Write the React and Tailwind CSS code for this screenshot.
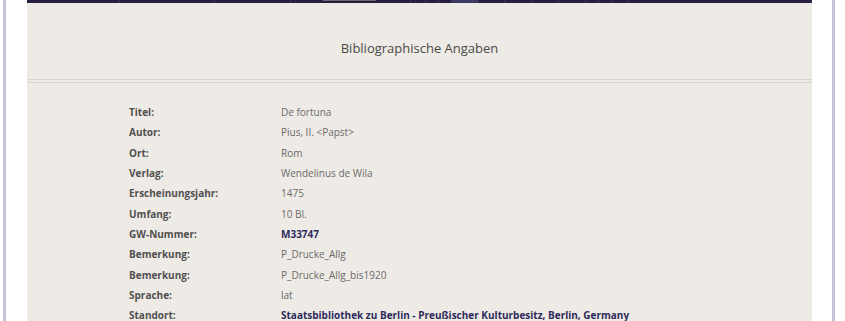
import React from "react";

const rows = [
  ["Titel:", "De fortuna", false],
  ["Autor:", "Pius, II. <Papst>", false],
  ["Ort:", "Rom", false],
  ["Verlag:", "Wendelinus de Wila", false],
  ["Erscheinungsjahr:", "1475", false],
  ["Umfang:", "10 Bl.", false],
  ["GW-Nummer:", "M33747", true],
  ["Bemerkung:", "P_Drucke_Allg", false],
  ["Bemerkung:", "P_Drucke_Allg_bis1920", false],
  ["Sprache:", "lat", false],
  ["Standort:", "Staatsbibliothek zu Berlin - Preußischer Kulturbesitz, Berlin, Germany", true],
];

// nav segment widths (px) between separators
const segs = [93, 95, 76, 120, 15, 13, 13, 27, 26, 27, 27, 27, 13, 14, 15, 184];

export default function App() {
  return (
    <div
      className="w-[845px] h-[321px] bg-white flex overflow-hidden"
      style={{ fontFamily: '"Open Sans", "Noto Sans", sans-serif' }}
    >
      <div className="w-[3px] shrink-0" />
      <div className="w-[3px] shrink-0 bg-[#c5c4d6]" />
      <div className="w-[21px] shrink-0" />
      <div className="w-[785px] shrink-0 bg-[#eeeae5] flex flex-col overflow-hidden">
        <div className="h-[3px] shrink-0 bg-[#25203f] flex">
          {segs.map((w, i) => (
            <div
              key={i}
              style={{ width: w }}
              className={
                "h-full border-r border-[#37334f] relative " +
                (i === 7 ? "bg-[#3e3a63]" : "")
              }
            >
              {i === 3 && (
                <div className="absolute left-[32px] top-0 w-[53px] h-[1px] bg-[#6a6872]" />
              )}
            </div>
          ))}
        </div>
        <div className="h-[77px] shrink-0 flex justify-center items-start pt-[36px] border-b border-[#d9d6d0]">
          <span className="text-[13px] leading-[18px] text-[#4a4a4a]">Bibliographische Angaben</span>
        </div>
        <div className="h-[2px] shrink-0" />
        <div className="shrink-0 border-t border-[#d9d6d0] pt-[19px] pl-[102px]">
          {rows.map(([label, value, link], i) => (
            <div key={i} className="flex h-[20.3px] items-center text-[10px] leading-[14px]">
              <div className="w-[152px] shrink-0 font-bold text-[#505050]">{label}</div>
              <div
                className={
                  link ? "font-bold text-[#2d2a5c] whitespace-nowrap" : "text-[#6b6b6b] whitespace-nowrap"
                }
              >
                {value}
              </div>
            </div>
          ))}
        </div>
      </div>
      <div className="w-[20px] shrink-0" />
      <div className="w-[3px] shrink-0 bg-[#c5c4d6]" />
    </div>
  );
}
